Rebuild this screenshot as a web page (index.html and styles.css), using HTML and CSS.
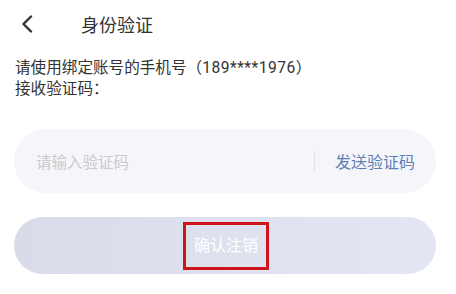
FILE: index.html
```html
<!DOCTYPE html>
<html lang="zh-CN">
<head>
	<meta charset="UTF-8">
	<meta name="viewport" content="width=device-width, initial-scale=1.0">
	<link rel="stylesheet" href="styles.css">
	<title>身份验证</title>
</head>
<body>
	<div class="header">
		<svg class="back" width="12" height="18" viewBox="0 0 12 18">
			<path d="M10 1.5 L2.5 9 L10 16.5" fill="none" stroke="#333" stroke-width="2.4" stroke-linecap="round" stroke-linejoin="round"/>
		</svg>
		<h1 class="title">身份验证</h1>
	</div>
	<p class="info">请使用绑定账号的手机号（<span class="phone">189****1976</span>）<br>接收验证码：</p>
	<div class="code-box">
		<span class="placeholder">请输入验证码</span>
		<span class="divider"></span>
		<span class="send">发送验证码</span>
	</div>
	<div class="confirm">
		<span class="confirm-text">确认注销</span>
	</div>
</body>
</html>
```

FILE: styles.css
```css
body {
	margin: 0;
	background-color: #fff;
	font-family: Roboto, "Noto Sans CJK SC", sans-serif;
	color: #333;
}

.header {
	display: flex;
	align-items: center;
	height: 48px;
	padding-left: 21px;
}

.back {
	display: block;
}

.title {
	margin: 0 0 0 48px;
	font-size: 18px;
	font-weight: normal;
	color: #333;
}

.info {
	margin: 10px 0 0 15px;
	font-size: 15.6px;
	line-height: 21px;
}

.phone {
	letter-spacing: 0.5px;
}

.code-box {
	display: flex;
	align-items: center;
	height: 64px;
	margin: 29px 20px 0 14px;
	padding: 0 21px 0 22px;
	background-color: #f6f6fa;
	border-radius: 32px;
}

.placeholder {
	flex: 1;
	font-size: 15.5px;
	color: #c9c9ce;
}

.divider {
	width: 1px;
	height: 20px;
	background-color: #e2e3e8;
	margin-right: 20px;
}

.send {
	font-size: 16px;
	color: #5e7fb5;
}

.confirm {
	display: flex;
	align-items: center;
	justify-content: center;
	height: 57px;
	margin: 24px 20px 0 14px;
	border-radius: 29px;
	background: linear-gradient(to right, #d8dce8, #e3e7f3);
}

.confirm-text {
	border: 3px solid #d0121b;
	padding: 0 8px;
	line-height: 42px;
	font-size: 16px;
	color: #fff;
	margin-left: 2px;
}
```
